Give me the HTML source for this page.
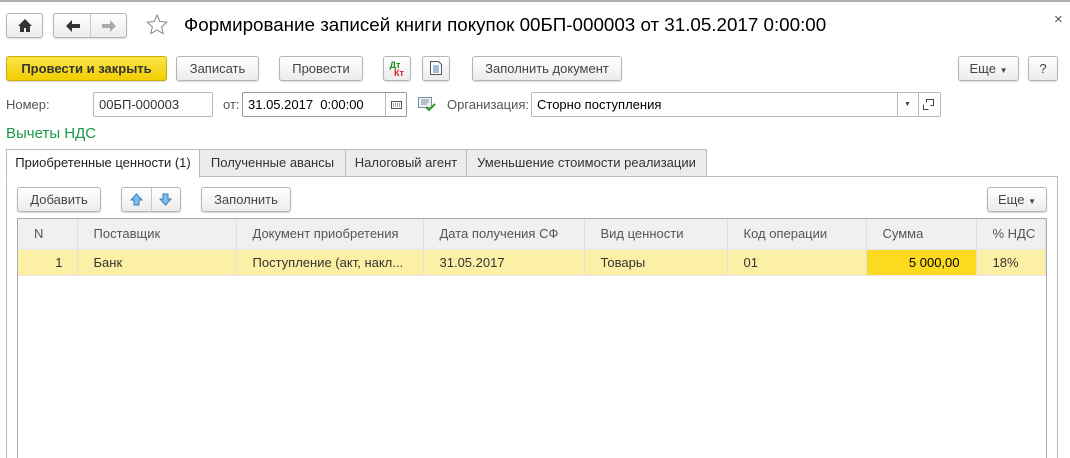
<!DOCTYPE html>
<html><head><meta charset="utf-8">
<style>
*{box-sizing:border-box;margin:0;padding:0}
html,body{width:1070px;height:458px;overflow:hidden}
body{background:#fff;font-family:"Liberation Sans","Noto Sans CJK SC",sans-serif;font-size:13px;color:#333;position:relative}
.a{position:absolute}
.btn{position:absolute;height:25px;border:1px solid #b4b4b4;border-radius:3px;background:linear-gradient(#fff,#ececec);box-shadow:0 1px 1px rgba(0,0,0,.15);text-align:center;line-height:23px;color:#444;font-size:13px}
.fld{position:absolute;height:25px;border:1px solid #b9b9b9;border-radius:2px;background:#fff;line-height:23px;padding-left:5px;color:#333}
.tab{position:absolute;top:149px;height:28px;border:1px solid #bcbcbc;background:#ececec;line-height:26px;text-align:center;color:#333}
th,td{font-weight:normal;text-align:left;padding-left:16px;border-right:1px solid #e0e0e0}
th{height:30px}
td{height:26px}
table{border-collapse:collapse;font-size:13px}
</style></head><body>
<div class="a" style="left:0;top:0;width:1070px;height:2px;background:#b0b0b0"></div>
<div class="btn" style="left:6px;top:13px;width:37px;height:25px">
<svg width="14" height="13" viewBox="0 0 14 13" style="margin-top:5px"><path d="M7 0L0 7h2v6h4V9h2v4h4V7h2z" fill="#333"/></svg></div>
<div class="btn" style="left:53px;top:13px;width:74px;height:25px">
<div class="a" style="left:36px;top:0;width:1px;height:23px;background:#c8c8c8"></div>
<svg class="a" style="left:12px;top:6px" width="14" height="12" viewBox="0 0 14 12"><path d="M0 6L6 0v4h8v4H6v4z" fill="#333"/></svg>
<svg class="a" style="left:48px;top:6px" width="14" height="12" viewBox="0 0 14 12"><path d="M14 6L8 0v4H0v4h8v4z" fill="#aaa"/></svg></div>
<svg class="a" style="left:146px;top:14px" width="22" height="21" viewBox="0 0 22 21"><path d="M11 1l2.9 6.5 7 .6-5.3 4.6 1.6 6.9L11 16l-6.2 3.6 1.6-6.9L1.1 8.1l7-.6z" fill="none" stroke="#888" stroke-width="1"/></svg>
<div class="a" style="left:184px;top:13px;font-size:18.8px;color:#000;line-height:24px;white-space:nowrap">Формирование записей книги покупок 00БП-000003 от 31.05.2017 0:00:00</div>
<div class="a" style="left:1054px;top:11px;font-size:15px;color:#555">×</div>

<div class="btn" style="left:6px;top:56px;width:161px;background:linear-gradient(#fbe44a,#f1cf00);border-color:#c9ad00;font-weight:bold;color:#333">Провести и закрыть</div>
<div class="btn" style="left:176px;top:56px;width:83px">Записать</div>
<div class="btn" style="left:279px;top:56px;width:84px">Провести</div>
<div class="btn" style="left:383px;top:56px;width:28px;line-height:8px;font-size:9px;font-weight:bold"><div style="color:#1a8a1a;margin-top:4px;margin-left:-4px">Дт</div><div style="color:#e02020;margin-left:4px">Кт</div></div>
<div class="btn" style="left:422px;top:56px;width:28px"><svg width="12" height="14" viewBox="0 0 12 14" style="margin-top:4px"><path d="M.5.5h8l3 3v10H.5z" fill="#fff" stroke="#555"/><path d="M3 5h6M3 7h6M3 9h6M3 11h6" stroke="#4a7ab8"/></svg></div>
<div class="btn" style="left:472px;top:56px;width:150px">Заполнить документ</div>
<div class="btn" style="left:958px;top:56px;width:61px">Еще <span style="font-size:8px">▼</span></div>
<div class="btn" style="left:1028px;top:56px;width:30px">?</div>

<div class="a" style="left:6px;top:97px;color:#555">Номер:</div>
<div class="fld" style="left:93px;top:92px;width:120px">00БП-000003</div>
<div class="a" style="left:223px;top:97px;color:#555">от:</div>
<div class="fld" style="left:242px;top:92px;width:165px;border-color:#999;color:#000">31.05.2017&nbsp; 0:00:00
<div class="a" style="left:142px;top:0;width:1px;height:23px;background:#bbb"></div>
<svg class="a" style="left:148px;top:8px" width="11" height="8"><rect x=".5" y=".5" width="10" height="7" fill="none" stroke="#555"/><path d="M2 3h7M2 5h7" stroke="#555" stroke-dasharray="1 1"/></svg></div>
<svg class="a" style="left:418px;top:96px" width="18" height="16" viewBox="0 0 18 16"><path d="M.5 1.5h13v10H.5z" fill="#eef3fa" stroke="#7a8ba0"/><path d="M3 4h8M3 6h8M3 8h6" stroke="#7a8ba0"/><path d="M8 11l3 3 6-6" fill="none" stroke="#2a9a2a" stroke-width="2"/></svg>
<div class="a" style="left:447px;top:97px;color:#555">Организация:</div>
<div class="fld" style="left:531px;top:92px;width:410px;color:#000">Сторно поступления
<div class="a" style="left:365px;top:0;width:1px;height:23px;background:#bbb"></div>
<div class="a" style="left:386px;top:0;width:1px;height:23px;background:#bbb"></div>
<div class="a" style="left:372px;top:0;font-size:7px;color:#444">▼</div>
<svg class="a" style="left:391px;top:6px" width="11" height="11"><path d="M3.5 3.5v-3h7v6h-3" fill="none" stroke="#444"/><path d="M.5 5.5v5h5" fill="none" stroke="#444"/></svg></div>

<div class="a" style="left:6px;top:125px;font-size:15px;color:#1a9a48">Вычеты НДС</div>

<div class="a" style="left:6px;top:176px;width:1052px;height:300px;border:1px solid #bcbcbc"></div>
<div class="tab" style="left:6px;width:194px;background:#fff;border-bottom-color:#fff;height:29px;color:#222">Приобретенные ценности (1)</div>
<div class="tab" style="left:199px;width:147px">Полученные авансы</div>
<div class="tab" style="left:345px;width:122px">Налоговый агент</div>
<div class="tab" style="left:466px;width:241px">Уменьшение стоимости реализации</div>

<div class="btn" style="left:17px;top:187px;width:84px">Добавить</div>
<div class="btn" style="left:121px;top:187px;width:60px">
<div class="a" style="left:29px;top:0;width:1px;height:23px;background:#c8c8c8"></div>
<svg class="a" style="left:8px;top:5px" width="13" height="13" viewBox="0 0 13 13"><path d="M6.5 1L1 7h3v5h5V7h3z" fill="#7cc0ee" stroke="#3a7cb8"/></svg>
<svg class="a" style="left:37px;top:5px" width="13" height="13" viewBox="0 0 13 13"><path d="M6.5 12L1 6h3V1h5v5h3z" fill="#7cc0ee" stroke="#3a7cb8"/></svg></div>
<div class="btn" style="left:201px;top:187px;width:90px">Заполнить</div>
<div class="btn" style="left:987px;top:187px;width:60px">Еще <span style="font-size:8px">▼</span></div>

<div class="a" style="left:17px;top:218px;width:1030px;height:260px;border:1px solid #aaa;background:#fff">
<table style="width:1028px;table-layout:fixed">
<colgroup><col style="width:59px"><col style="width:159px"><col style="width:187px"><col style="width:161px"><col style="width:143px"><col style="width:139px"><col style="width:110px"><col></colgroup>
<tr style="background:#f0f0f0;color:#555"><th style="padding-left:16px">N</th><th>Поставщик</th><th>Документ приобретения</th><th>Дата получения СФ</th><th>Вид ценности</th><th>Код операции</th><th>Сумма</th><th>% НДС</th></tr>
<tr style="background:#fcf0a6;color:#333;border-top:1px solid #e6e6e6"><td style="text-align:right;padding-right:14px;padding-left:0">1</td><td>Банк</td><td>Поступление (акт, накл...</td><td>31.05.2017</td><td>Товары</td><td>01</td><td style="background:#fbda20;text-align:right;padding-right:16px;color:#000">5 000,00</td><td>18%</td></tr>
</table>
<div style="height:1px;background:#e6e6e6"></div>
</div>
</body></html>
